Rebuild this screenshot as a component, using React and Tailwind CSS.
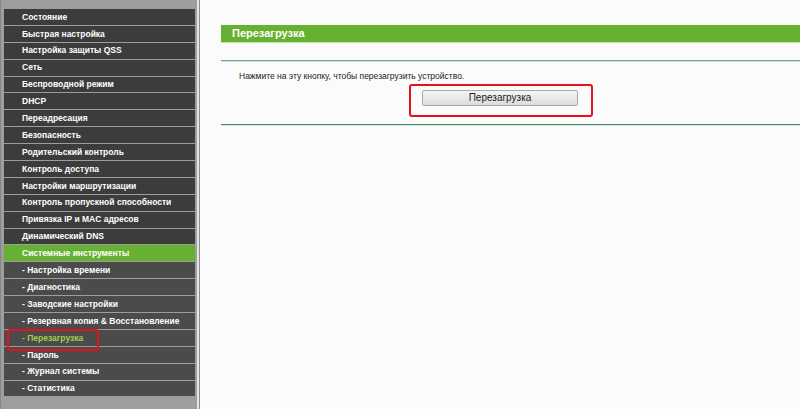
import React from "react";

const items = [
  { t: "Состояние" },
  { t: "Быстрая настройка" },
  { t: "Настройка защиты QSS" },
  { t: "Сеть" },
  { t: "Беспроводной режим" },
  { t: "DHCP" },
  { t: "Переадресация" },
  { t: "Безопасность" },
  { t: "Родительский контроль" },
  { t: "Контроль доступа" },
  { t: "Настройки маршрутизации" },
  { t: "Контроль пропускной способности" },
  { t: "Привязка IP и MAC адресов" },
  { t: "Динамический DNS" },
  { t: "Системные инструменты", green: true },
  { t: "- Настройка времени", sub: true },
  { t: "- Диагностика", sub: true },
  { t: "- Заводские настройки", sub: true },
  { t: "- Резервная копия & Восстановление", sub: true },
  { t: "- Перезагрузка", sub: true, active: true },
  { t: "- Пароль", sub: true },
  { t: "- Журнал системы", sub: true },
  { t: "- Статистика", sub: true },
];

function Item({ it }) {
  const bg = it.green ? "bg-[#66b132]" : it.sub ? "bg-[#4b4b4b]" : "bg-[#3c3c3c]";
  const color = it.active ? "text-[#9fd24c]" : "text-white";
  return (
    <div
      className={`relative h-[16.9px] border-t border-[#9c9c9c] ${bg} ${color} flex items-center pl-[18px] text-[8.5px] font-bold leading-none whitespace-nowrap`}
    >
      {it.t}
      {it.active && (
        <div className="absolute z-10 left-[3px] -top-px w-[92px] h-[22px] border-2 border-[#e3121d] rounded-[3px]" />
      )}
    </div>
  );
}

export default function App() {
  return (
    <div
      className="flex w-[800px] h-[409px] overflow-hidden bg-[#fbfbfb]"
      style={{ fontFamily: '"Liberation Sans", Arial, sans-serif' }}
    >
      <div className="flex h-full shrink-0">
        <div className="w-[197px] h-full bg-[#9e9e9e] border-l border-[#858585] pl-[3px] pr-[2px] pt-[8px]">
          {items.map((it, i) => (
            <Item key={i} it={it} />
          ))}
          <div className="border-t border-[#9c9c9c]" />
        </div>
        <div className="w-[2px] h-full bg-[#e4e4e4]" />
        <div className="w-[1px] h-full bg-[#8d8d8d]" />
      </div>
      <div className="flex-1 pl-[21px] pt-[25px]">
        <div className="h-[17px] bg-[#66b132] flex items-center pl-[11px] text-white font-bold text-[11px] leading-none">
          Перезагрузка
        </div>
        <div className="h-[1px] bg-[#c4e2ae]" />
        <div className="h-[17px]" />
        <div className="h-[1px] bg-[#6fa68b]" />
        <div className="h-[1px] bg-[#cfe4d7]" />
        <div className="pl-[18px] pt-[8px] text-[8.5px] leading-[12px] text-[#222]">
          Нажмите на эту кнопку, чтобы перезагрузить устройство.
        </div>
        <div className="ml-[188px] mt-[2px] w-[184px] h-[33px] border-2 border-[#e3121d] rounded-[3px] pl-[11px] pt-[4px]">
          <button className="w-[156px] h-[16px] border border-[#a9a9a9] rounded-[2px] bg-gradient-to-b from-[#f6f6f6] to-[#dcdcdc] text-[10px] leading-none text-[#222] flex items-center justify-center">
            Перезагрузка
          </button>
        </div>
        <div className="mt-[7px] h-[1px] bg-[#4f8d6e]" />
        <div className="h-[1px] bg-[#cfe4d7]" />
      </div>
    </div>
  );
}
